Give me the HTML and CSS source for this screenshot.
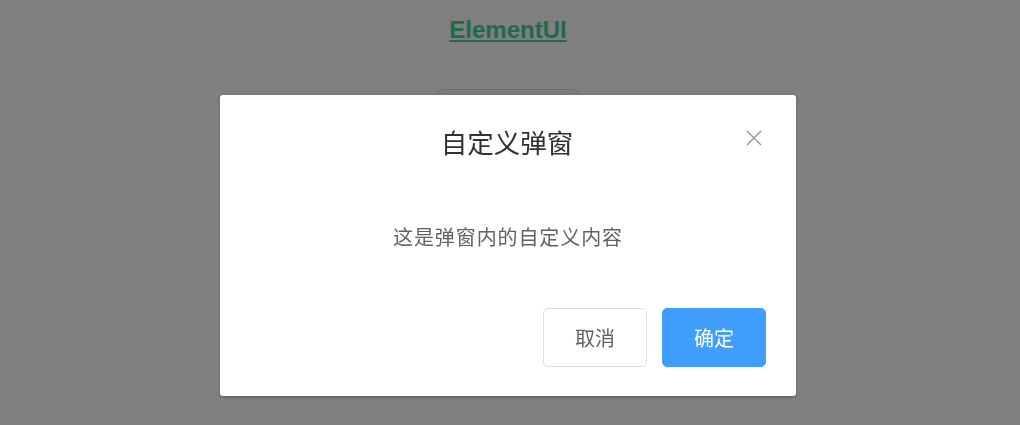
FILE: index.html
```html
<!DOCTYPE html>
<html lang="zh-CN">
<head>
<meta charset="utf-8">
<title>ElementUI</title>
<link rel="stylesheet" href="styles.css">
</head>
<body>
<div class="page">
  <h1 class="brand"><a href="#">ElementUI</a></h1>
  <button class="open-btn" aria-label="打开弹窗"></button>
</div>
<div class="mask">
  <div class="dialog" role="dialog">
    <div class="dialog-header">
      <span class="dialog-title">自定义弹窗</span>
      <button class="dialog-close" aria-label="关闭">
        <svg viewBox="0 0 16 16" width="16" height="16"><path d="M1 1L15 15M15 1L1 15" stroke="#909399" stroke-width="1.4" fill="none"/></svg>
      </button>
    </div>
    <div class="dialog-body">这是弹窗内的自定义内容</div>
    <div class="dialog-footer">
      <button class="btn btn-default">取消</button>
      <button class="btn btn-primary">确定</button>
    </div>
  </div>
</div>
</body>
</html>
```

FILE: styles.css
```css
html, body {
  margin: 0;
  padding: 0;
}
body {
  background: #ffffff;
  font-family: "Noto Sans CJK SC", "Liberation Sans", sans-serif;
  height: 425px;
  overflow: hidden;
}
.page {
  display: flex;
  flex-direction: column;
  align-items: center;
  padding-top: 16px;
  padding-right: 4px;
}
.brand {
  margin: 0;
  font-family: "Liberation Sans", Arial, sans-serif;
  font-size: 24px;
  line-height: 28px;
  font-weight: bold;
}
.brand a {
  color: #3cd494;
  text-decoration: underline;
}
.open-btn {
  margin-top: 45px;
  width: 146px;
  height: 50px;
  border: 1px solid #d9e4f2;
  background: #f5f6f9;
  border-radius: 8px;
}
.mask {
  position: fixed;
  inset: 0;
  padding-right: 4px;
  background: rgba(0, 0, 0, 0.5);
  display: flex;
  flex-direction: column;
  align-items: center;
}
.dialog {
  margin-top: 95px;
  width: 576px;
  background: #ffffff;
  border-radius: 3px;
  box-shadow: 0 1px 3px rgba(0, 0, 0, 0.3);
  position: relative;
}
.dialog-header {
  padding: 29px 30px 0;
  text-align: center;
}
.dialog-title {
  font-size: 26.5px;
  line-height: 36px;
  color: #303133;
  display: inline-block;
  margin-left: -2px;
}
.dialog-close {
  position: absolute;
  top: 35px;
  right: 34px;
  width: 16px;
  height: 16px;
  padding: 0;
  border: 0;
  background: transparent;
  cursor: pointer;
  display: flex;
}
.dialog-body {
  padding: 63px 30px 57px;
  text-align: center;
  font-size: 20px;
  line-height: 28px;
  color: #606266;
  letter-spacing: 0.9px;
}
.dialog-footer {
  display: flex;
  justify-content: flex-end;
  gap: 15px;
  padding: 0 30px 29px;
}
.btn {
  width: 104px;
  height: 59px;
  border-radius: 5px;
  font-family: inherit;
  font-size: 20px;
  padding: 0;
  cursor: pointer;
}
.btn-default {
  background: #ffffff;
  border: 1px solid #dcdfe6;
  color: #606266;
}
.btn-primary {
  background: #409eff;
  border: 1px solid #409eff;
  color: #ffffff;
}
```
